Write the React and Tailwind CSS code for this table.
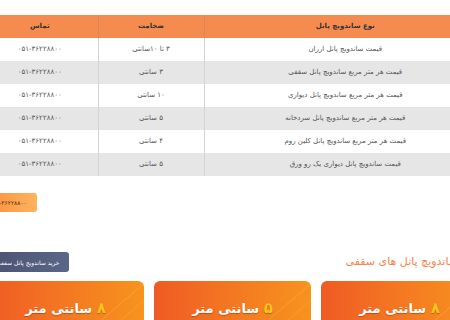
import React from "react";

const rows = [
  { name: "قیمت ساندویچ پانل ارزان", size: "۳ تا ۱۰سانتی", phone: "۰۵۱-۳۶۲۲۸۸۰۰" },
  { name: "قیمت هر متر مربع ساندویچ پانل سقفی", size: "۳ سانتی", phone: "۰۵۱-۳۶۲۲۸۸۰۰" },
  { name: "قیمت هر متر مربع ساندویچ پانل دیواری", size: "۱۰ سانتی", phone: "۰۵۱-۳۶۲۲۸۸۰۰" },
  { name: "قیمت هر متر مربع ساندویچ پانل سردخانه", size: "۵ سانتی", phone: "۰۵۱-۳۶۲۲۸۸۰۰" },
  { name: "قیمت هر متر مربع ساندویچ پانل کلین روم", size: "۴ سانتی", phone: "۰۵۱-۳۶۲۲۸۸۰۰" },
  { name: "قیمت ساندویچ پانل دیواری یک رو ورق", size: "۵ سانتی", phone: "۰۵۱-۳۶۲۲۸۸۰۰" },
];

const cards = ["۸", "۵", "۸"];

function Card({ num }) {
  return (
    <div className="relative h-[100px] overflow-hidden rounded-t-[6px] bg-gradient-to-r from-[#ef5a24] to-[#f7931e]">
      <svg className="absolute inset-0" width="157" height="100" viewBox="0 0 157 100">
        <line x1="90" y1="60" x2="160" y2="0" stroke="#ffd27a" strokeOpacity="0.35" strokeWidth="0.8" />
        <line x1="110" y1="60" x2="170" y2="8" stroke="#ffd27a" strokeOpacity="0.25" strokeWidth="0.8" />
      </svg>
      <div className="relative pt-[17px] text-center text-[13px] font-bold leading-[20px] text-white [text-shadow:0_1px_1px_rgba(0,0,0,0.25)]">
        <span className="text-[15px] text-[#f9c21a]">{num}</span> سانتی متر
      </div>
    </div>
  );
}

export default function App() {
  return (
    <div className="h-[320px] w-[450px] overflow-hidden bg-white" style={{ fontFamily: "'DejaVu Sans', sans-serif" }}>
      <div dir="rtl" className="ml-[-18px] w-[504px] pt-[15px]">
        {/* جدول قیمت */}
        <table className="w-full border-collapse text-[7px] text-[#555]">
          <thead>
            <tr className="h-[23px] bg-[#f68b4f] font-bold text-[#333]">
              <th className="w-[282px] border-l border-[#d9875a] font-bold">نوع ساندویچ پانل</th>
              <th className="w-[106px] border-l border-[#d9875a] font-bold">ضخامت</th>
              <th className="font-bold">تماس</th>
            </tr>
          </thead>
          <tbody>
            {rows.map((r, i) => (
              <tr key={i} className={"h-[23px] " + (i % 2 ? "bg-[#e6e6e6]" : "bg-white")}>
                <td className="border-l border-[#d4d4d4] text-center">{r.name}</td>
                <td className="border-l border-[#d4d4d4] text-center">{r.size}</td>
                <td className="text-center">{r.phone}</td>
              </tr>
            ))}
          </tbody>
        </table>

        {/* دکمه تماس */}
        <div className="mt-[17px] flex justify-end">
          <div className="flex h-[19px] w-[55px] items-center justify-start overflow-hidden rounded-[3px] bg-gradient-to-l from-[#ffb35e] to-[#ff8a3d] pr-[10px] text-[6px] whitespace-nowrap text-[#5a3412]">
            ۰۵۱-۳۶۲۲۸۸۰۰
          </div>
        </div>

        {/* عنوان بخش */}
        <div className="mt-[40px] flex items-center justify-between pr-[28px] pl-[5px]">
          <h2 className="text-[11px] leading-[20px] font-normal text-[#f7844a]">ساندویچ پانل های سقفی</h2>
          <div className="flex h-[20px] items-center rounded-[3px] bg-gradient-to-l from-[#5a6688] to-[#4b5272] px-[9px] text-[6px] whitespace-nowrap text-white">
            خرید ساندویچ پانل سقفی
          </div>
        </div>

        {/* کارت ها */}
        <div className="mt-[9px] grid grid-cols-3 gap-[10px] pr-[8px] pl-[5px]">
          {cards.map((n, i) => (
            <Card key={i} num={n} />
          ))}
        </div>
      </div>
    </div>
  );
}
